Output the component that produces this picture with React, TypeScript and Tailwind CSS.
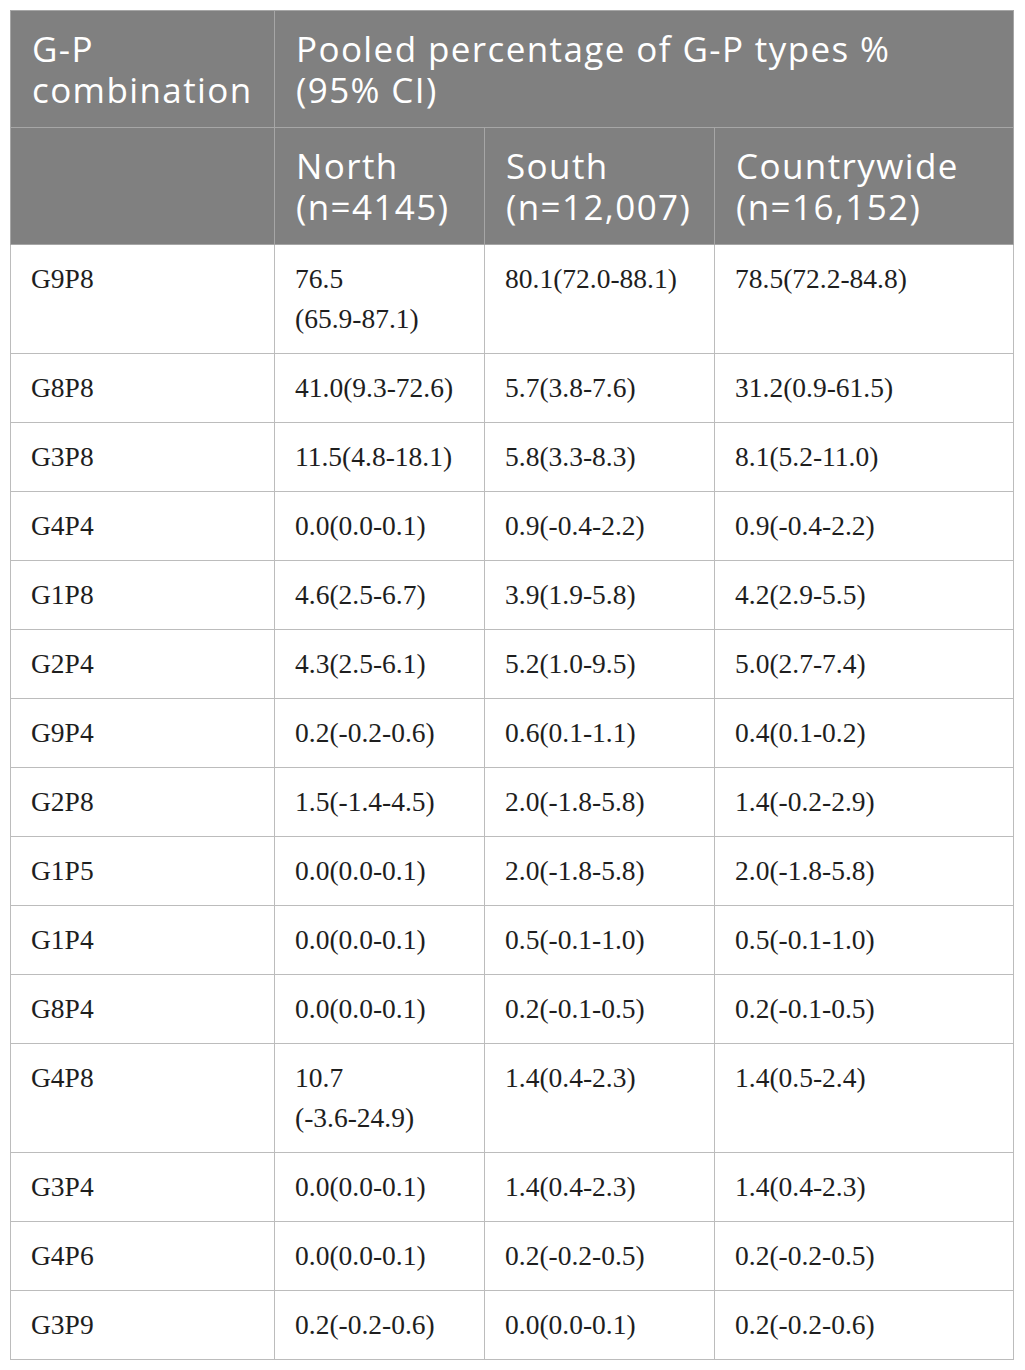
import React from "react";

const rows: [string, React.ReactNode, string, string][] = [
  ["G9P8", <>76.5<br />(65.9-87.1)</>, "80.1(72.0-88.1)", "78.5(72.2-84.8)"],
  ["G8P8", "41.0(9.3-72.6)", "5.7(3.8-7.6)", "31.2(0.9-61.5)"],
  ["G3P8", "11.5(4.8-18.1)", "5.8(3.3-8.3)", "8.1(5.2-11.0)"],
  ["G4P4", "0.0(0.0-0.1)", "0.9(-0.4-2.2)", "0.9(-0.4-2.2)"],
  ["G1P8", "4.6(2.5-6.7)", "3.9(1.9-5.8)", "4.2(2.9-5.5)"],
  ["G2P4", "4.3(2.5-6.1)", "5.2(1.0-9.5)", "5.0(2.7-7.4)"],
  ["G9P4", "0.2(-0.2-0.6)", "0.6(0.1-1.1)", "0.4(0.1-0.2)"],
  ["G2P8", "1.5(-1.4-4.5)", "2.0(-1.8-5.8)", "1.4(-0.2-2.9)"],
  ["G1P5", "0.0(0.0-0.1)", "2.0(-1.8-5.8)", "2.0(-1.8-5.8)"],
  ["G1P4", "0.0(0.0-0.1)", "0.5(-0.1-1.0)", "0.5(-0.1-1.0)"],
  ["G8P4", "0.0(0.0-0.1)", "0.2(-0.1-0.5)", "0.2(-0.1-0.5)"],
  ["G4P8", <>10.7<br />(-3.6-24.9)</>, "1.4(0.4-2.3)", "1.4(0.5-2.4)"],
  ["G3P4", "0.0(0.0-0.1)", "1.4(0.4-2.3)", "1.4(0.4-2.3)"],
  ["G4P6", "0.0(0.0-0.1)", "0.2(-0.2-0.5)", "0.2(-0.2-0.5)"],
  ["G3P9", "0.2(-0.2-0.6)", "0.0(0.0-0.1)", "0.2(-0.2-0.6)"],
];

const th =
  "border border-[#a6a6a6] bg-[#808080] text-white font-normal text-left align-top pl-[21px] pr-[4px] py-[17px] text-[35px] leading-[41px] tracking-[1.4px] [font-family:'Open_Sans',sans-serif]";
const td =
  "border border-[#bcbcbc] text-[#1e1e1e] align-top px-[20px] py-[14px] text-[27.5px] leading-[40px] [font-family:'Liberation_Serif',serif]";

export default function App() {
  return (
    <div className="bg-white w-[1025px] min-h-[1370px] pt-[10px] pl-[10px]">
      <table className="border-collapse table-fixed w-[1003px]">
        <colgroup>
          <col className="w-[264px]" />
          <col className="w-[210px]" />
          <col className="w-[230px]" />
          <col className="w-[299px]" />
        </colgroup>
        <thead>
          <tr>
            <th className={th}>
              G-P
              <br />
              combination
            </th>
            <th className={th} colSpan={3}>
              Pooled percentage of G-P types %
              <br />
              (95% CI)
            </th>
          </tr>
          <tr>
            <th className={th}></th>
            <th className={th}>
              North
              <br />
              (n=4145)
            </th>
            <th className={th}>
              South
              <br />
              (n=12,007)
            </th>
            <th className={th}>
              Countrywide
              <br />
              (n=16,152)
            </th>
          </tr>
        </thead>
        <tbody>
          {rows.map((r, i) => (
            <tr key={i}>
              <td className={td}>{r[0]}</td>
              <td className={td}>{r[1]}</td>
              <td className={td}>{r[2]}</td>
              <td className={td}>{r[3]}</td>
            </tr>
          ))}
        </tbody>
      </table>
    </div>
  );
}
